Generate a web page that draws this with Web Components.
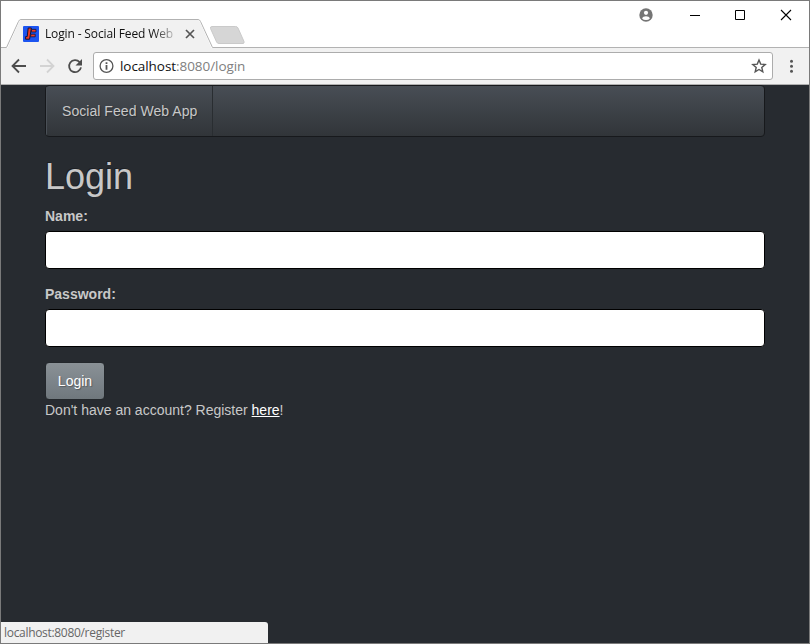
<!DOCTYPE html>
<html lang="en">
<head>
<meta charset="utf-8">
<title>Login - Social Feed Web App</title>
<style>
html, body { margin: 0; height: 100%; overflow: hidden; }
</style>
</head>
<body>
<browser-window>
  <tab-strip slot="tabs">Login - Social Feed Web App</tab-strip>
  <tool-bar slot="toolbar" host="localhost" path=":8080/login"></tool-bar>
  <nav-bar>Social Feed Web App</nav-bar>
  <login-form></login-form>
  <status-bubble slot="status">localhost:8080/register</status-bubble>
</browser-window>
<script>
const define = (name, html) => customElements.define(name, class extends HTMLElement {
  constructor() {
    super();
    this.attachShadow({ mode: 'open' }).innerHTML = html;
  }
  connectedCallback() {
    for (const el of this.shadowRoot.querySelectorAll('[data-attr]'))
      el.textContent = this.getAttribute(el.dataset.attr) || '';
  }
});

define('browser-window', `
<style>
:host { display: flex; flex-direction: column; box-sizing: border-box; width: 810px; height: 644px; border: 1px solid #7a7a7a; background: #272b30; position: relative; overflow: hidden; }
main { flex: 1; padding: 0 44px; font: 14px/20px "Liberation Sans", Arial, sans-serif; color: #c8c8c8; }
.status { position: absolute; left: 0; bottom: 0; }
</style>
<slot name="tabs"></slot><slot name="toolbar"></slot>
<main><slot></slot></main>
<div class="status"><slot name="status"></slot></div>`);

define('tab-strip', `
<style>
:host { display: block; position: relative; height: 47px; flex: none; background: #fff; font: 12px/18px "Open Sans", sans-serif; color: #222; }
.shapes { position: absolute; inset: 0; }
.tab { position: relative; display: flex; align-items: center; height: 30px; padding: 18px 0 0 22px; width: 180px; }
.fav { width: 16px; height: 16px; flex: none; }
.title { width: 131px; margin-left: 6px; overflow: hidden; white-space: nowrap; letter-spacing: -0.14px; color: #111; -webkit-mask-image: linear-gradient(90deg, #000 108px, transparent 135px); }
.close { margin-left: 7px; flex: none; }
.controls { position: absolute; right: 0; top: 0; }
</style>
<svg class="shapes" width="808" height="47">
  <path d="M0 46.5H5.5L17.5 20.5Q18.3 18.5 20 18.5H197Q198.7 18.5 199.5 20.5L211.5 46.5H808" fill="none" stroke="#b2b2b2"/>
  <path d="M6.5 47L18.3 20.6Q18.9 19 20.2 19H196.8Q198.1 19 198.7 20.6L210.5 47Z" fill="#f1f1f1"/>
  <path d="M211 25.5H234.5Q236.3 25.5 237 27L243 40.5Q243.5 42.5 242 42.5H218Q216.3 42.5 215.6 41L209.5 27.5Q209 25.5 211 25.5Z" fill="#d6d6d6" stroke="#cacaca"/>
</svg>
<div class="tab">
  <svg class="fav" viewBox="0 0 16 16"><rect width="16" height="16" rx="1" fill="#1c54f0"/><path d="M5.2 2H8.4L6.6 13.2H2.6V10.6H4.2Z" fill="#f03a26" stroke="#10163a" stroke-width="1"/><path d="M8.6 3.4H13V6H8.3Z M7.9 8.2H12.2V10.8H7.5Z" fill="#f03a26" stroke="#10163a" stroke-width=".8"/></svg>
  <div class="title"><slot></slot></div>
  <svg class="close" width="14" height="14" viewBox="0 0 14 14"><path d="M3 3L11 11M11 3L3 11" stroke="#555" stroke-width="1.7"/></svg>
</div>
<svg class="controls" width="188" height="30" viewBox="620 0 188 30">
  <circle cx="645" cy="14" r="6.7" fill="#757575"/><circle cx="645" cy="11.8" r="2.1" fill="#fff"/><path d="M641 17.2Q642 15.3 645 15.3T649 17.2Q647.6 19.1 645 19.1T641 17.2Z" fill="#fff"/>
  <path d="M689 14.5H699" stroke="#000"/>
  <path d="M734.5 9.5H743.5V18.5H734.5Z" fill="none" stroke="#000"/>
  <path d="M780 9L790 19M790 9L780 19" stroke="#000" stroke-width="1.1"/>
</svg>`);

define('tool-bar', `
<style>
:host { display: flex; flex: none; align-items: center; box-sizing: border-box; height: 37px; background: #f1f1f1; border-bottom: 1px solid #b0b0b0; font: 13.5px/20px "Open Sans", sans-serif; }
.nav { flex: none; }
.box { display: flex; align-items: center; box-sizing: border-box; width: 680px; height: 28px; border: 1px solid #acacac; border-radius: 3px; background: #fff; padding: 0 5px; }
.url { flex: 1; margin-left: 6px; color: #808080; letter-spacing: -0.06px; white-space: nowrap; }
.url b { font-weight: 400; color: #111; }
.menu { margin-left: 11px; }
svg { display: block; }
</style>
<svg class="nav" width="92" height="36" viewBox="1 48 92 36" fill="none">
  <path d="M26 66H13M19 59.5L12.5 66L19 72.5" stroke="#4d4d4d" stroke-width="1.8"/>
  <path d="M40 66H53M47 59.5L53.5 66L47 72.5" stroke="#d3d3d3" stroke-width="1.8"/>
  <path d="M79.6 62.1A6 6 0 1 0 81 67.4" stroke="#4d4d4d" stroke-width="1.8"/><path d="M82 59V65.5H75.5Z" fill="#4d4d4d"/>
</svg>
<div class="box">
  <svg width="15" height="16" viewBox="0 0 15 16"><circle cx="7.5" cy="8" r="6.4" fill="none" stroke="#555" stroke-width="1.3"/><path d="M7.5 7V11.8M7.5 4.2V5.9" stroke="#555" stroke-width="1.8"/></svg>
  <div class="url"><b data-attr="host"></b><span data-attr="path"></span></div>
  <svg width="16" height="16" viewBox="0 0 16 16"><path d="M8 2L9.7 6.1L14.2 6.5L10.8 9.4L11.8 13.8L8 11.5L4.2 13.8L5.2 9.4L1.8 6.5L6.3 6.1Z" fill="none" stroke="#555" stroke-width="1.4"/></svg>
</div>
<svg class="menu" width="16" height="16"><g fill="#555"><circle cx="7.5" cy="3.3" r="1.5"/><circle cx="7.5" cy="8.3" r="1.5"/><circle cx="7.5" cy="13.3" r="1.5"/></g></svg>`);

define('nav-bar', `
<style>
:host { display: flex; box-sizing: border-box; height: 52px; margin-bottom: 20px; border: 1px solid #17191c; border-radius: 4px; background: linear-gradient(#484e55, #3a3f44 60%, #313539); overflow: hidden; text-shadow: 1px 1px 1px rgba(0,0,0,.3); }
.brand { padding: 15px 15px; border-right: 1px solid #292d31; border-left: 1px solid #4a5057; white-space: nowrap; letter-spacing: .05px; }
</style>
<div class="brand"><slot></slot></div>`);

define('field-row', `
<style>
:host { display: block; margin-bottom: 15px; }
label { display: block; font-weight: 700; margin-bottom: 5px; }
input { display: block; box-sizing: border-box; width: 100%; height: 38px; border: 1px solid #000; border-radius: 4px; background: #fff; padding: 8px 12px; outline: 0; }
</style>
<label><slot></slot></label><input aria-label="field">`);

define('login-form', `
<style>
:host { display: block; }
h1 { margin: 0 0 9px; font-size: 36px; line-height: 40px; font-weight: 400; text-shadow: -1px -1px 0 rgba(0,0,0,.3); }
button { display: block; box-sizing: border-box; width: 60px; height: 38px; padding: 0; border: 1px solid #24282c; border-radius: 4px; background: linear-gradient(#8a9196, #7a8288 60%, #70787d); color: #fff; font: inherit; text-shadow: 1px 1px 1px rgba(0,0,0,.3); }
a { color: #fff; text-decoration: underline; }
</style>
<h1>Login</h1>
<field-row>Name:</field-row>
<field-row>Password:</field-row>
<button>Login</button>
<div>Don't have an account? Register <a>here</a>!</div>`);

define('status-bubble', `
<style>
:host { display: block; box-sizing: border-box; width: 267px; height: 21px; padding-left: 3px; border-top-right-radius: 3px; background: #f1f1f1; color: #666; font: 12px/21px "Open Sans", sans-serif; letter-spacing: -0.31px; }
</style>
<slot></slot>`);
</script>
</body>
</html>
